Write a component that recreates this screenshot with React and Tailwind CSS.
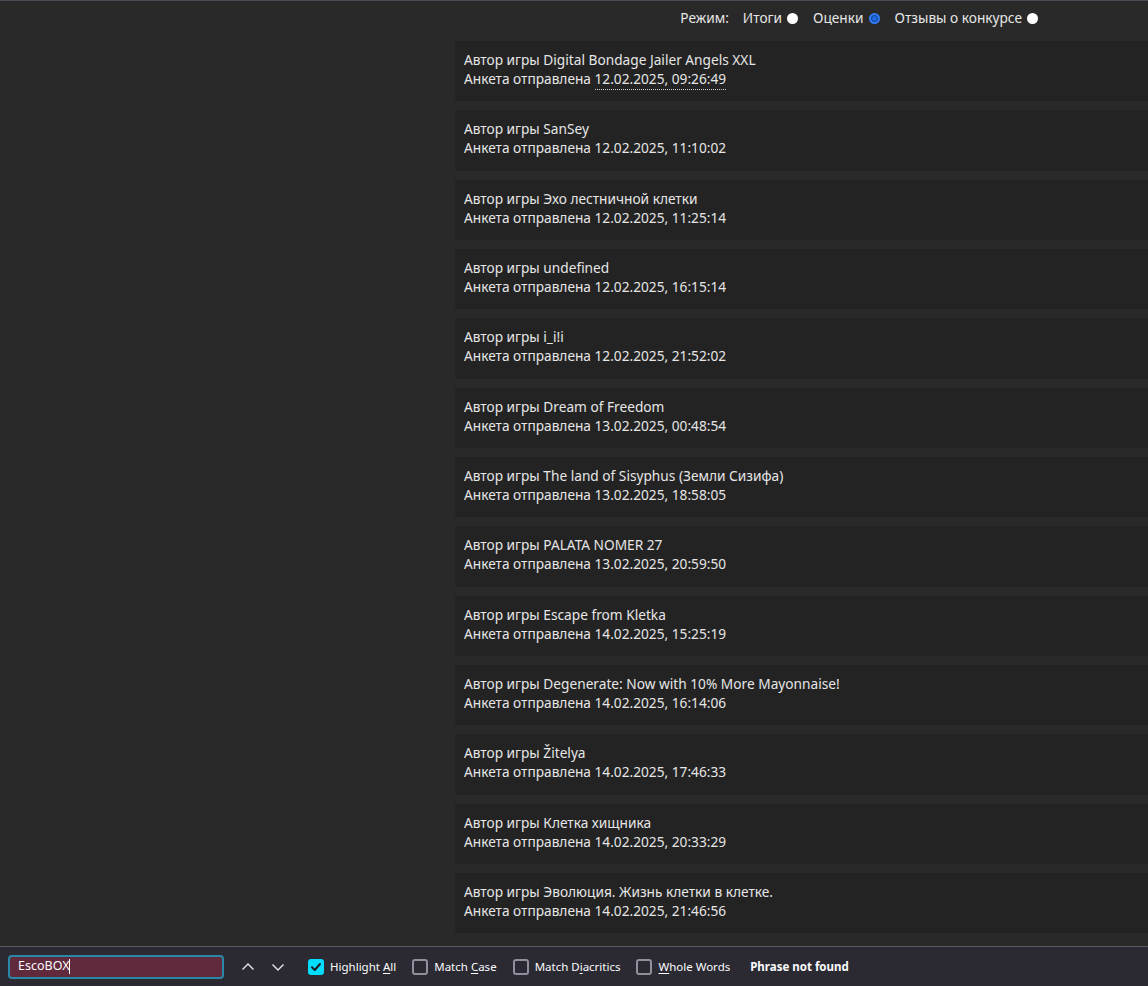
import { useState } from "react";

const entries = [
  ["Digital Bondage Jailer Angels XXL", "12.02.2025, 09:26:49"],
  ["SanSey", "12.02.2025, 11:10:02"],
  ["Эхо лестничной клетки", "12.02.2025, 11:25:14"],
  ["undefined", "12.02.2025, 16:15:14"],
  ["i_i!i", "12.02.2025, 21:52:02"],
  ["Dream of Freedom", "13.02.2025, 00:48:54"],
  ["The land of Sisyphus (Земли Сизифа)", "13.02.2025, 18:58:05"],
  ["PALATA NOMER 27", "13.02.2025, 20:59:50"],
  ["Escape from Kletka", "14.02.2025, 15:25:19"],
  ["Degenerate: Now with 10% More Mayonnaise!", "14.02.2025, 16:14:06"],
  ["Žitelya", "14.02.2025, 17:46:33"],
  ["Клетка хищника", "14.02.2025, 20:33:29"],
  ["Эволюция. Жизнь клетки в клетке.", "14.02.2025, 21:46:56"],
];

function Radio({ label, checked, onClick }) {
  return (
    <label className="flex items-center gap-[5px] cursor-pointer" onClick={onClick}>
      <span>{label}</span>
      {checked ? (
        <span className="w-[11px] h-[11px] rounded-full bg-[#2f7cf6] flex items-center justify-center">
          <span className="w-[7px] h-[7px] rounded-full border border-[#123a8a] bg-[#1f6be0]" />
        </span>
      ) : (
        <span className="w-[11px] h-[11px] rounded-full bg-white" />
      )}
    </label>
  );
}

function Check({ checked, children }) {
  return (
    <label className="flex items-center gap-[6px]">
      {checked ? (
        <span className="w-[16px] h-[16px] rounded-[3px] bg-[#00ddff] flex items-center justify-center">
          <svg width="12" height="12" viewBox="0 0 12 12" fill="none">
            <path d="M2 6.2 L4.8 9 L10 3" stroke="#1c1b22" strokeWidth="2" strokeLinecap="round" strokeLinejoin="round" />
          </svg>
        </span>
      ) : (
        <span className="w-[16px] h-[16px] rounded-[3px] border-2 border-[#8f8f9d]" />
      )}
      <span>{children}</span>
    </label>
  );
}

export default function App() {
  const [mode, setMode] = useState("scores");

  return (
    <div className="w-[1148px] h-[986px] bg-[#292929] text-[#e6e6e6] flex flex-col overflow-hidden font-['Noto_Sans',sans-serif] text-[13.7px]">
      <div className="h-px bg-[#4d4c57]" />
      <div className="flex-1 overflow-hidden flex flex-col">
        {/* mode switch */}
        <div className="flex items-center justify-end gap-[15px] pr-[110px] h-[35px]">
          <span className="mr-[-1px]">Режим:</span>
          <Radio label="Итоги" checked={mode === "totals"} onClick={() => setMode("totals")} />
          <Radio label="Оценки" checked={mode === "scores"} onClick={() => setMode("scores")} />
          <Radio label="Отзывы о конкурсе" checked={mode === "reviews"} onClick={() => setMode("reviews")} />
        </div>
        {/* list of sent forms */}
        <div className="ml-[455px] flex flex-col gap-[9px] pt-[5px]">
          {entries.map(([title, date], i) => (
            <div key={i} className="bg-[#232323] h-[60.33px] px-[9px] pt-[9px] leading-[19px] whitespace-nowrap">
              <div>Автор игры {title}</div>
              <div>
                Анкета отправлена{" "}
                <span className={i === 0 ? "border-b border-dotted border-[#cfcfcf] pb-[1px]" : ""}>{date}</span>
              </div>
            </div>
          ))}
        </div>
      </div>
      {/* find bar */}
      <div className="h-[40px] shrink-0 border-t border-[#5b5a66] bg-[#2b2a33] flex items-center pl-[8px] text-[#fbfbfe] text-[11.5px]">
        <div className="w-[216px] h-[24px] rounded-[4px] border-2 border-[#2a87a6] bg-[#612a3c] flex items-center pl-[8px] text-[12.5px]">
          <span>EscoBOX</span>
          <span className="w-px h-[15px] bg-white" />
        </div>
        <div className="flex items-center gap-[16px] ml-[17px]">
          <svg width="14" height="14" viewBox="0 0 14 14" fill="none">
            <path d="M1.5 9.5 L7 4 L12.5 9.5" stroke="#e6e6ea" strokeWidth="1.4" />
          </svg>
          <svg width="14" height="14" viewBox="0 0 14 14" fill="none">
            <path d="M1.5 4.5 L7 10 L12.5 4.5" stroke="#e6e6ea" strokeWidth="1.4" />
          </svg>
        </div>
        <div className="flex items-center ml-[23px] gap-[16px]">
          <Check checked>
            Highlight <span className="underline underline-offset-2">A</span>ll
          </Check>
          <Check>
            Match <span className="underline underline-offset-2">C</span>ase
          </Check>
          <Check>
            Match D<span className="underline underline-offset-2">i</span>acritics
          </Check>
          <Check>
            <span className="underline underline-offset-2">W</span>hole Words
          </Check>
          <span className="font-bold ml-[4px]">Phrase not found</span>
        </div>
      </div>
    </div>
  );
}
